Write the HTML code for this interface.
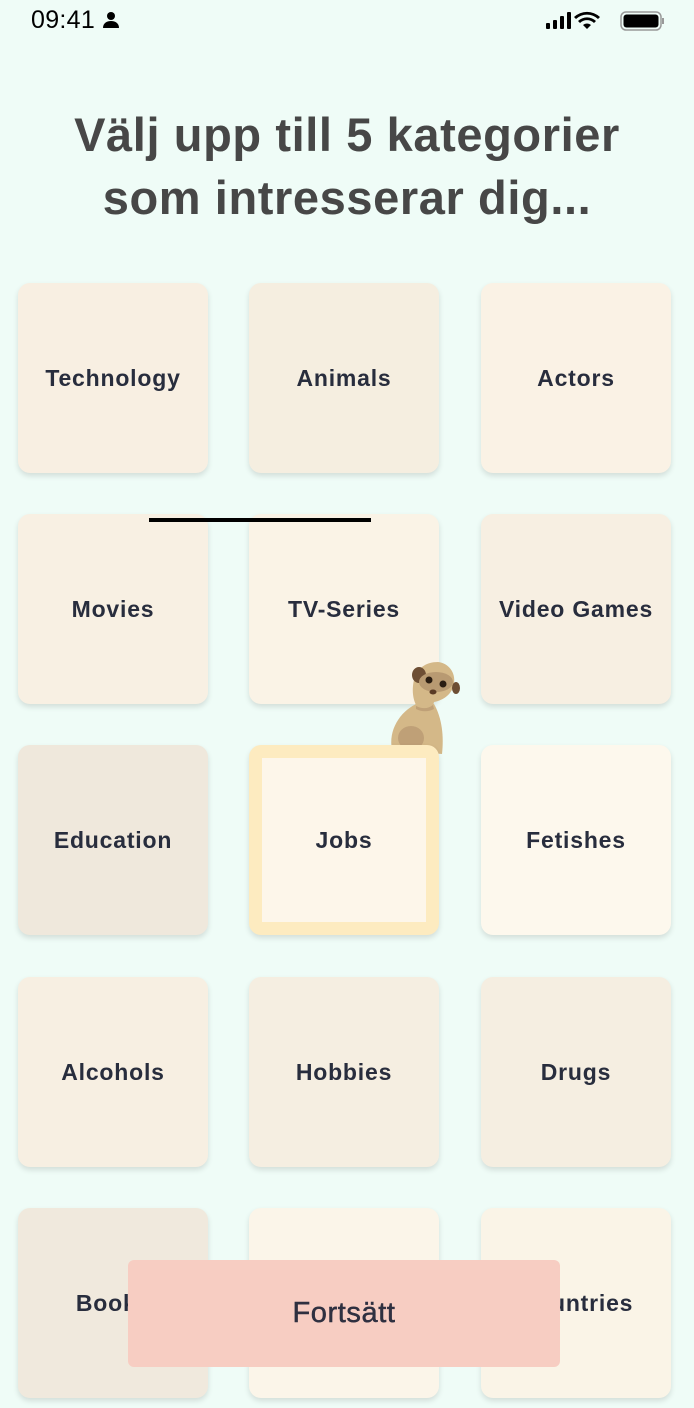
<!DOCTYPE html>
<html><head><meta charset="utf-8"><style>
*{margin:0;padding:0;box-sizing:border-box}
body{width:694px;height:1408px;background:#effcf7;font-family:"Liberation Sans",sans-serif;position:relative;overflow:hidden}
.sb{position:absolute;top:6px;left:31px;font-size:25px;color:#000;letter-spacing:0.3px}
h1{position:absolute;top:103px;left:0;width:694px;text-align:center;font-size:47px;line-height:63px;color:#474747;font-weight:bold;letter-spacing:0.6px}
.c{position:absolute;width:190px;height:190px;border-radius:12px;display:flex;align-items:center;justify-content:center;font-weight:bold;font-size:23px;letter-spacing:0.8px;color:#282d3d;box-shadow:0 3px 6px rgba(0,0,0,0.12)}
.btn{position:absolute;left:128px;top:1260px;width:432px;height:107px;background:#f7cdc2;border-radius:6px;display:flex;align-items:center;justify-content:center;font-size:29px;letter-spacing:0.6px;color:#2f3040;-webkit-text-stroke:0.5px #2f3040}
</style></head><body>
<div class="sb">09:41 <svg width="18" height="18" viewBox="0 0 18 18" style="vertical-align:-1px"><circle cx="9" cy="5" r="4"/><path d="M1 17c0-5 4-7 8-7s8 2 8 7z"/></svg></div>
<svg style="position:absolute;left:545px;top:10px" width="120" height="22" viewBox="0 0 120 22">
<rect x="1" y="13" width="4" height="6" rx="1"/><rect x="8" y="10" width="4" height="9" rx="1"/><rect x="15" y="6" width="4" height="13" rx="1"/><rect x="22" y="2" width="4" height="17" rx="1"/>
<path d="M42 19l-4-4a6 6 0 0 1 8 0z"/><path d="M33 11a13 13 0 0 1 18 0l-2 2a10 10 0 0 0-14 0z"/><path d="M29 7a19 19 0 0 1 26 0l-2 2a16 16 0 0 0-22 0z"/>
<rect x="76" y="2" width="40" height="18" rx="5" fill="none" stroke="#999" stroke-width="1.5"/><rect x="78.5" y="4.5" width="35" height="13" rx="3"/><rect x="117" y="8" width="2" height="6" fill="#999"/></svg>
<h1>Välj upp till 5 kategorier<br>som intresserar dig...</h1>
<div class="c" style="left:18px;top:283px;background:#f8efe2">Technology</div>
<div class="c" style="left:249px;top:283px;background:#f5eee0">Animals</div>
<div class="c" style="left:481px;top:283px;background:#faf2e5">Actors</div>
<div class="c" style="left:18px;top:514px;background:#f8f0e3">Movies</div>
<div class="c" style="left:249px;top:514px;background:#faf3e6">TV-Series</div>
<div class="c" style="left:481px;top:514px;background:#f7efe2">Video Games</div>
<div style="position:absolute;left:149px;top:518px;width:222px;height:4px;background:#000"></div>
<svg style="position:absolute;left:370px;top:650px" width="100" height="110" viewBox="0 0 100 110">
<path d="M22 100c-4-20 8-38 24-46l18 0c8 14 10 32 8 50z" fill="#d4b888"/>
<ellipse cx="41" cy="88" rx="13" ry="12" fill="#bfa077"/>
<path d="M48 58c-6-8-6-20-4-28 3-12 12-18 24-18 10 1 18 10 16 22-2 10-10 16-20 18l-2 8z" fill="#d4b888"/>
<path d="M46 56c6 3 12 3 17-1l1 4c-6 3-12 3-18 0z" fill="#bfa077"/>
<ellipse cx="49" cy="25" rx="7" ry="8" fill="#6d4e34"/><ellipse cx="86" cy="38" rx="4" ry="6" fill="#6d4e34"/>
<ellipse cx="66" cy="32" rx="17" ry="10" fill="#b89a72"/>
<circle cx="59" cy="30" r="3.5" fill="#2a1d12"/><circle cx="73" cy="34" r="3.5" fill="#2a1d12"/>
<ellipse cx="63" cy="42" rx="3.5" ry="2.5" fill="#5a3a24"/></svg>
<div class="c" style="left:18px;top:745px;background:#efe8dc">Education</div>
<div class="c" style="left:249px;top:745px;background:#fdf6ea;border:13px solid #fdebc0">Jobs</div>
<div class="c" style="left:481px;top:745px;background:#fdf8ed">Fetishes</div>
<div class="c" style="left:18px;top:977px;background:#f7efe2">Alcohols</div>
<div class="c" style="left:249px;top:977px;background:#f5eee1">Hobbies</div>
<div class="c" style="left:481px;top:977px;background:#f5eee1">Drugs</div>
<div class="c" style="left:18px;top:1208px;background:#f0e9dd">Books</div>
<div class="c" style="left:249px;top:1208px;background:#fbf5e9"></div>
<div class="c" style="left:481px;top:1208px;background:#faf4e7">Countries</div>
<div class="btn">Fortsätt</div>
</body></html>
